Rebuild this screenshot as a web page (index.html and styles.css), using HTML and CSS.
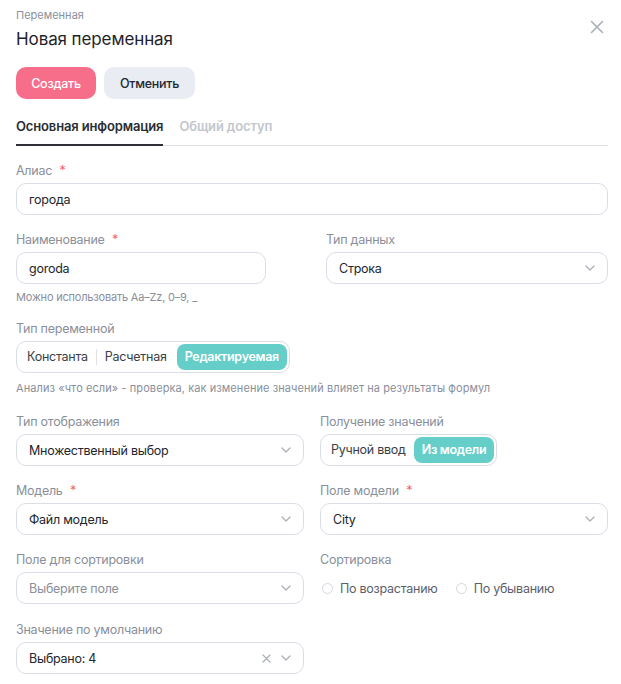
FILE: index.html
```html
<!DOCTYPE html>
<html lang="ru">
<head>
<meta charset="utf-8">
<link rel="stylesheet" href="styles.css">
</head>
<body>
<div class="panel">
  <div class="head">
    <div class="head-text">
      <div class="eyebrow">Переменная</div>
      <h1 class="title">Новая переменная</h1>
    </div>
    <button class="close" aria-label="Закрыть">
      <svg width="14" height="14" viewBox="0 0 14 14"><path d="M1.5 1.5 12.5 12.5M12.5 1.5 1.5 12.5" stroke="#a9aebb" stroke-width="1.6" stroke-linecap="round" fill="none"/></svg>
    </button>
  </div>

  <div class="actions">
    <button class="btn btn-primary">Создать</button>
    <button class="btn btn-secondary">Отменить</button>
  </div>

  <div class="tabs">
    <div class="tab active">Основная информация</div>
    <div class="tab">Общий доступ</div>
  </div>

  <div class="field f-alias">
    <div class="label">Алиас <span class="req">*</span></div>
    <div class="input">города</div>
  </div>

  <div class="row row-name">
    <div class="field">
      <div class="label">Наименование <span class="req">*</span></div>
      <div class="input">goroda</div>
      <div class="hint">Можно использовать Aa–Zz, 0–9, _</div>
    </div>
    <div class="field">
      <div class="label">Тип данных</div>
      <div class="input select"><span>Строка</span><span class="icons"><svg class="chev" width="10" height="6" viewBox="0 0 10 6"><path d="M1 1l4 4 4-4" stroke="#a9aebb" stroke-width="1.2" fill="none" stroke-linecap="round" stroke-linejoin="round"/></svg></span></div>
    </div>
  </div>

  <div class="field f-vartype">
    <div class="label">Тип переменной</div>
    <div class="segmented">
      <span class="seg">Константа</span><span class="sep"></span><span class="seg">Расчетная</span><span class="seg on">Редактируемая</span>
    </div>
    <div class="hint hint2">Анализ «что если» - проверка, как изменение значений влияет на результаты формул</div>
  </div>

  <div class="row r1">
    <div class="field">
      <div class="label">Тип отображения</div>
      <div class="input select"><span>Множественный выбор</span><span class="icons"><svg class="chev" width="10" height="6" viewBox="0 0 10 6"><path d="M1 1l4 4 4-4" stroke="#a9aebb" stroke-width="1.2" fill="none" stroke-linecap="round" stroke-linejoin="round"/></svg></span></div>
    </div>
    <div class="field">
      <div class="label">Получение значений</div>
      <div class="segmented">
        <span class="seg">Ручной ввод</span><span class="seg on">Из модели</span>
      </div>
    </div>
  </div>

  <div class="row r2">
    <div class="field">
      <div class="label">Модель <span class="req">*</span></div>
      <div class="input select"><span>Файл модель</span><span class="icons"><svg class="chev" width="10" height="6" viewBox="0 0 10 6"><path d="M1 1l4 4 4-4" stroke="#a9aebb" stroke-width="1.2" fill="none" stroke-linecap="round" stroke-linejoin="round"/></svg></span></div>
    </div>
    <div class="field">
      <div class="label">Поле модели <span class="req">*</span></div>
      <div class="input select"><span>City</span><span class="icons"><svg class="chev" width="10" height="6" viewBox="0 0 10 6"><path d="M1 1l4 4 4-4" stroke="#a9aebb" stroke-width="1.2" fill="none" stroke-linecap="round" stroke-linejoin="round"/></svg></span></div>
    </div>
  </div>

  <div class="row r3">
    <div class="field">
      <div class="label">Поле для сортировки</div>
      <div class="input select"><span class="ph">Выберите поле</span><span class="icons"><svg class="chev" width="10" height="6" viewBox="0 0 10 6"><path d="M1 1l4 4 4-4" stroke="#a9aebb" stroke-width="1.2" fill="none" stroke-linecap="round" stroke-linejoin="round"/></svg></span></div>
    </div>
    <div class="field">
      <div class="label">Сортировка</div>
      <div class="radios">
        <label class="radio"><span class="dot"></span>По возрастанию</label>
        <label class="radio"><span class="dot"></span>По убыванию</label>
      </div>
    </div>
  </div>

  <div class="row r4">
    <div class="field">
      <div class="label">Значение по умолчанию</div>
      <div class="input select"><span>Выбрано: 4</span><span class="icons"><svg class="clr" width="9" height="9" viewBox="0 0 9 9"><path d="M1 1l7 7M8 1 1 8" stroke="#a9aebb" stroke-width="1.2" stroke-linecap="round" fill="none"/></svg><svg class="chev" width="10" height="6" viewBox="0 0 10 6"><path d="M1 1l4 4 4-4" stroke="#a9aebb" stroke-width="1.2" fill="none" stroke-linecap="round" stroke-linejoin="round"/></svg></span></div>
    </div>
    <div></div>
  </div>
</div>
</body>
</html>
```
FILE: styles.css
```css
* { box-sizing: border-box; }
html, body { margin: 0; padding: 0; background: #fff; }
body {
  font-family: Inter, "Noto Sans", "Liberation Sans", sans-serif;
  color: #22262e;
  font-size: 12.5px;
  letter-spacing: -0.25px;
}
.panel { padding: 8px 13px 10px 16px; }

.head { display: flex; justify-content: space-between; align-items: flex-start; }
.eyebrow { font-size: 11px; line-height: 14px; color: #8c919d; letter-spacing: 0; }
.title { margin: 5px 0 0; font-size: 17px; line-height: 24px; font-weight: 400; color: #1f2329; letter-spacing: -0.1px; }
.close { border: 0; background: none; padding: 0; margin: 12px 4px 0 0; width: 14px; height: 14px; display: flex; }

.actions { display: flex; gap: 8px; margin-top: 16px; }
.btn {
  font-family: inherit; font-size: 12.5px; letter-spacing: -0.25px; height: 32px; border: 0; border-radius: 10px;
  padding: 0; font-weight: 500; cursor: pointer;
}
.btn-primary { background: #f76e8b; color: #fff; width: 80px; }
.btn-secondary { background: #e9ecf3; color: #22262e; width: 91px; }

.tabs { display: flex; gap: 16px; margin-top: 18px; border-bottom: 1px solid #dfe1e6; }
.tab { font-size: 13px; line-height: 18px; font-weight: 600; color: #c3c6cd; padding-bottom: 9px; letter-spacing: -0.15px; }
.tab.active { color: #2a2d33; border-bottom: 2px solid #2e3036; margin-bottom: -1px; }

.label { font-size: 12.5px; line-height: 16px; color: #8a8f9b; margin-bottom: 4px; white-space: nowrap; }
.req { color: #f4606f; margin-left: 4px; }

.input {
  height: 32px; border: 1px solid #d9dde6; border-radius: 10px;
  padding: 0 12px; display: flex; align-items: center; color: #22262e;
}
.select { justify-content: space-between; }
.ph { color: #8a8f9b; }
.icons { display: flex; align-items: center; gap: 10px; }

.hint { font-size: 11px; line-height: 16px; color: #8a8f9b; margin-top: 5px; white-space: nowrap; letter-spacing: -0.2px; }
.hint2 { margin-top: 7px; letter-spacing: 0.08px; }

.f-alias { margin-top: 17px; }
.row { display: grid; grid-template-columns: 1fr 1fr; column-gap: 16px; }
.row-name { grid-template-columns: 250px 282px; column-gap: 60px; margin-top: 17px; }
.f-vartype { margin-top: 16px; }
.r1 { margin-top: 18px; }
.r2, .r3 { margin-top: 17px; }
.r4 { margin-top: 18px; }

.field { display: flex; flex-direction: column; }
.segmented {
  display: inline-flex; align-items: center; height: 32px; padding: 2px;
  border: 1px solid #d9dde6; border-radius: 10px; align-self: flex-start;
}
.seg { padding: 0 8px; line-height: 26px; height: 26px; color: #3a3e46; }
.seg.on { background: #66cec9; color: #fff; font-weight: 600; border-radius: 8px; padding: 0 8px; letter-spacing: -0.3px; }
.sep { width: 1px; height: 16px; background: #dfe1e6; }
.f-vartype .seg:nth-child(3) { padding-right: 10px; }

.radios { display: flex; gap: 18px; height: 32px; align-items: center; padding-left: 2px; }
.radio { display: flex; align-items: center; gap: 7px; color: #5b606b; }
.dot { width: 11px; height: 11px; border: 1px solid #d3d7df; border-radius: 50%; }
```
